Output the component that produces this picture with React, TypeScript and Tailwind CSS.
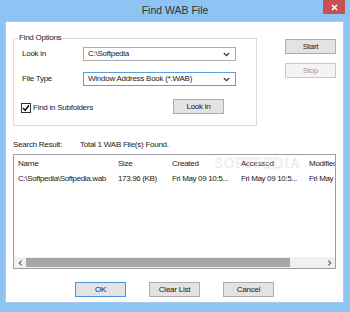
import React from "react";

const Chevron = () => (
  <svg width="7" height="5" viewBox="0 0 7 5" className="shrink-0">
    <path d="M0.8 1 L3.5 3.7 L6.2 1" fill="none" stroke="#333" strokeWidth="1.1" />
  </svg>
);

const Btn = ({
  label,
  disabled,
  def,
}: {
  label: string;
  disabled?: boolean;
  def?: boolean;
}) => (
  <div
    className={
      "w-[51px] h-[15px] flex items-center justify-center border leading-none " +
      (disabled
        ? "bg-[#f4f4f4] border-[#c9c9c9] text-[#9a9a9a]"
        : def
        ? "bg-[#e3e3e3] border-[#4f93d8] text-[#1a1a1a]"
        : "bg-[#e3e3e3] border-[#adadad] text-[#1a1a1a]")
    }
  >
    {label}
  </div>
);

const Cell = ({ w, children }: { w: string; children: React.ReactNode }) => (
  <span className={w + " shrink-0 overflow-hidden whitespace-nowrap pl-[4px]"}>{children}</span>
);

export default function App() {
  return (
    <div
      className="w-[350px] h-[312px] bg-[#8ec4f3] flex flex-col text-[8px] tracking-[-0.25px] text-[#1a1a1a] overflow-hidden"
      style={{ fontFamily: '"Liberation Sans", Arial, sans-serif' }}
    >
      {/* title bar */}
      <div className="h-[21px] relative flex items-center justify-center shrink-0">
        <span className="text-[10.5px] tracking-normal text-[#333] mt-[1px]">Find WAB File</span>
        <div className="absolute right-[5px] top-0 w-[22px] h-[14px] bg-[#c75050] flex items-center justify-center">
          <svg width="7" height="7" viewBox="0 0 7 7">
            <path d="M1 1 L6 6 M6 1 L1 6" stroke="#ffffff" strokeWidth="1.6" />
          </svg>
        </div>
      </div>

      {/* client area */}
      <div className="mx-[5px] w-[339px] h-[282px] bg-white border border-[#a9cdef] box-border flex flex-col relative shrink-0">
        {/* top section */}
        <div className="flex pl-[7px]">
          {/* group */}
          <div className="mt-[16px] w-[244px] h-[88px] border border-[#dcdcdc] flex flex-col">
            <span className="-mt-[7px] ml-[4px] px-[1px] bg-white self-start h-[12px] leading-[12px]">
              Find Options
            </span>
            <div className="flex items-center mt-[3px] pl-[8px]">
              <span className="w-[61px]">Look in</span>
              <div className="w-[153px] h-[14px] border border-[#abadb3] flex items-center pl-[4px] pr-[5px] justify-between">
                <span>C:\Softpedia</span>
                <Chevron />
              </div>
            </div>
            <div className="flex items-center mt-[11px] pl-[8px]">
              <span className="w-[61px]">File Type</span>
              <div className="w-[153px] h-[14px] border border-[#5a9fe0] flex items-center pl-[4px] pr-[5px] justify-between">
                <span>Window Address Book (*.WAB)</span>
                <Chevron />
              </div>
            </div>
            <div className="flex items-center mt-[13px] pl-[7px]">
              <div className="w-[10px] h-[10px] border border-[#333] bg-white flex items-center justify-center mt-[2px]">
                <svg width="8" height="8" viewBox="0 0 8 8">
                  <path d="M1 4 L3.2 6.3 L7 1.3" fill="none" stroke="#111" strokeWidth="1.5" />
                </svg>
              </div>
              <span className="ml-[2px] mt-[2px]">Find in Subfolders</span>
              <div className="ml-[80px]">
                <Btn label="Look in" />
              </div>
            </div>
          </div>
          {/* side buttons */}
          <div className="ml-[28px] mt-[17px] flex flex-col gap-[9px]">
            <Btn label="Start" />
            <Btn label="Stop" disabled />
          </div>
        </div>

        {/* search result line */}
        <div className="flex mt-[13px] pl-[7px] h-[12px] items-center">
          <span className="w-[67px]">Search Result:</span>
          <span>Total 1 WAB File(s) Found.</span>
        </div>

        {/* list */}
        <div className="ml-[7px] mt-[3px] w-[323px] h-[115px] border border-[#9a9fa6] flex flex-col relative overflow-hidden">
          <div className="flex h-[17px] items-center shrink-0">
            <Cell w="w-[100px]">Name</Cell>
            <Cell w="w-[54px]">Size</Cell>
            <Cell w="w-[69px]">Created</Cell>
            <Cell w="w-[68px]">Accessed</Cell>
            <Cell w="w-[40px]">Modified</Cell>
          </div>
          <div className="flex h-[14px] items-center shrink-0 tracking-[-0.35px]">
            <Cell w="w-[100px]">C:\Softpedia\Softpedia.wab</Cell>
            <Cell w="w-[54px]">173.96 (KB)</Cell>
            <Cell w="w-[69px]">Fri May 09 10:5...</Cell>
            <Cell w="w-[68px]">Fri May 09 10:5...</Cell>
            <Cell w="w-[40px]">Fri May 09 10:5...</Cell>
          </div>
          <div className="flex-1" />
          <div className="h-[11px] bg-[#f0f0f0] flex items-center shrink-0">
            <div className="w-[12px] flex items-center justify-center">
              <svg width="5" height="6" viewBox="0 0 5 6">
                <path d="M3.8 0.6 L1.2 3 L3.8 5.4" fill="none" stroke="#606060" strokeWidth="1.1" />
              </svg>
            </div>
            <div className="w-[264px] h-[9px] bg-[#a6a6a6]" />
            <div className="flex-1" />
            <div className="w-[12px] flex items-center justify-center">
              <svg width="5" height="6" viewBox="0 0 5 6">
                <path d="M1.2 0.6 L3.8 3 L1.2 5.4" fill="none" stroke="#606060" strokeWidth="1.1" />
              </svg>
            </div>
          </div>
          <span
            className="absolute left-[201px] top-[0px] text-[14px] tracking-[1.2px] text-transparent pointer-events-none leading-[18px]"
            style={{ WebkitTextStroke: "0.5px #e4e4e4", fontFamily: '"Liberation Serif", serif' }}
            aria-hidden="true"
          >
            SOFTPEDIA
          </span>
        </div>

        {/* bottom buttons */}
        <div className="flex justify-center gap-[23px] mt-[13px]">
          <Btn label="OK" def />
          <Btn label="Clear List" />
          <Btn label="Cancel" />
        </div>
      </div>
    </div>
  );
}
